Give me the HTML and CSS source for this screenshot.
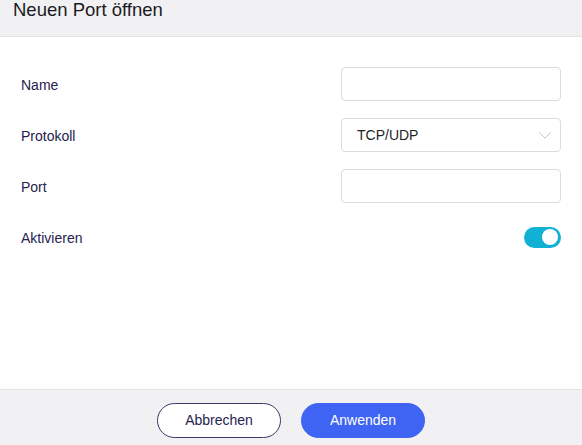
FILE: index.html
```html
<!DOCTYPE html>
<html lang="de">
<head>
<meta charset="utf-8">
<title>Neuen Port öffnen</title>
<link rel="stylesheet" href="styles.css">
</head>
<body>
<div class="dialog">
  <header class="dialog-header">
    <h1 class="dialog-title">Neuen Port öffnen</h1>
  </header>
  <main class="dialog-body">
    <div class="form-row">
      <label class="form-label">Name</label>
      <div class="field"><input class="text-input" type="text"></div>
    </div>
    <div class="form-row">
      <label class="form-label">Protokoll</label>
      <div class="field select">
        <span class="select-value">TCP/UDP</span>
        <svg class="chevron" width="12" height="7" viewBox="0 0 12 7"><path d="M0.5 0.5 L6 6 L11.5 0.5" fill="none" stroke="#c4c4c8" stroke-width="1"/></svg>
      </div>
    </div>
    <div class="form-row">
      <label class="form-label">Port</label>
      <div class="field"><input class="text-input" type="text"></div>
    </div>
    <div class="form-row">
      <label class="form-label">Aktivieren</label>
      <div class="toggle-wrap"><span class="toggle"><span class="knob"></span></span></div>
    </div>
  </main>
  <footer class="dialog-footer">
    <button class="btn btn-cancel">Abbrechen</button>
    <button class="btn btn-primary">Anwenden</button>
  </footer>
</div>
</body>
</html>
```
FILE: styles.css
```css
html, body {
  margin: 0;
  padding: 0;
  height: 100%;
}
body {
  font-family: "Liberation Sans", Arial, sans-serif;
  background: #ffffff;
}
.dialog {
  display: flex;
  flex-direction: column;
  height: 445px;
  overflow: hidden;
}
.dialog-header {
  height: 36px;
  background: #f1f1f3;
  border-bottom: 1px solid #e3e3e6;
  padding: 0 13px;
  flex: none;
}
.dialog-title {
  margin: 0;
  font-size: 18.5px;
  font-weight: normal;
  line-height: 20px;
  color: #1b1b1f;
}
.dialog-body {
  flex: 1;
  padding: 30px 21px 0 21px;
  display: flex;
  flex-direction: column;
  gap: 17px;
}
.form-row {
  display: flex;
  align-items: center;
  justify-content: space-between;
  height: 34px;
}
.form-label {
  font-size: 14px;
  color: #25224f;
  padding-top: 1px;
}
.field {
  width: 220px;
  height: 34px;
  box-sizing: border-box;
  border: 1px solid #dcdcdf;
  border-radius: 4px;
  background: #fff;
}
.text-input {
  width: 100%;
  height: 100%;
  box-sizing: border-box;
  border: none;
  outline: none;
  background: transparent;
  padding: 0 15px;
  font: inherit;
}
.select {
  display: flex;
  align-items: center;
  justify-content: space-between;
  padding: 0 9px 0 15px;
}
.select-value {
  font-size: 14px;
  color: #1f1f24;
}
.chevron {
  display: block;
}
.toggle-wrap {
  display: flex;
  align-items: center;
}
.toggle {
  position: relative;
  display: block;
  width: 37px;
  height: 21px;
  border-radius: 11px;
  background: #10b1d4;
}
.knob {
  position: absolute;
  top: 2.5px;
  right: 3px;
  width: 16px;
  height: 16px;
  border-radius: 50%;
  background: #ffffff;
}
.dialog-footer {
  flex: none;
  height: 56px;
  background: #f1f1f3;
  border-top: 1px solid #e3e3e6;
  display: flex;
  justify-content: center;
  align-items: flex-start;
  gap: 20px;
  padding-top: 13px;
  box-sizing: border-box;
}
.btn {
  width: 124px;
  height: 35px;
  border-radius: 18px;
  font-family: "Liberation Sans", Arial, sans-serif;
  font-size: 14px;
  line-height: 16px;
  padding: 0 0 1px 0;
  cursor: pointer;
  box-sizing: border-box;
}
.btn-cancel {
  background: #ffffff;
  border: 1px solid #3c3868;
  color: #26234f;
}
.btn-primary {
  background: #3f64f4;
  border: 1px solid #3f64f4;
  color: #ffffff;
}
```
